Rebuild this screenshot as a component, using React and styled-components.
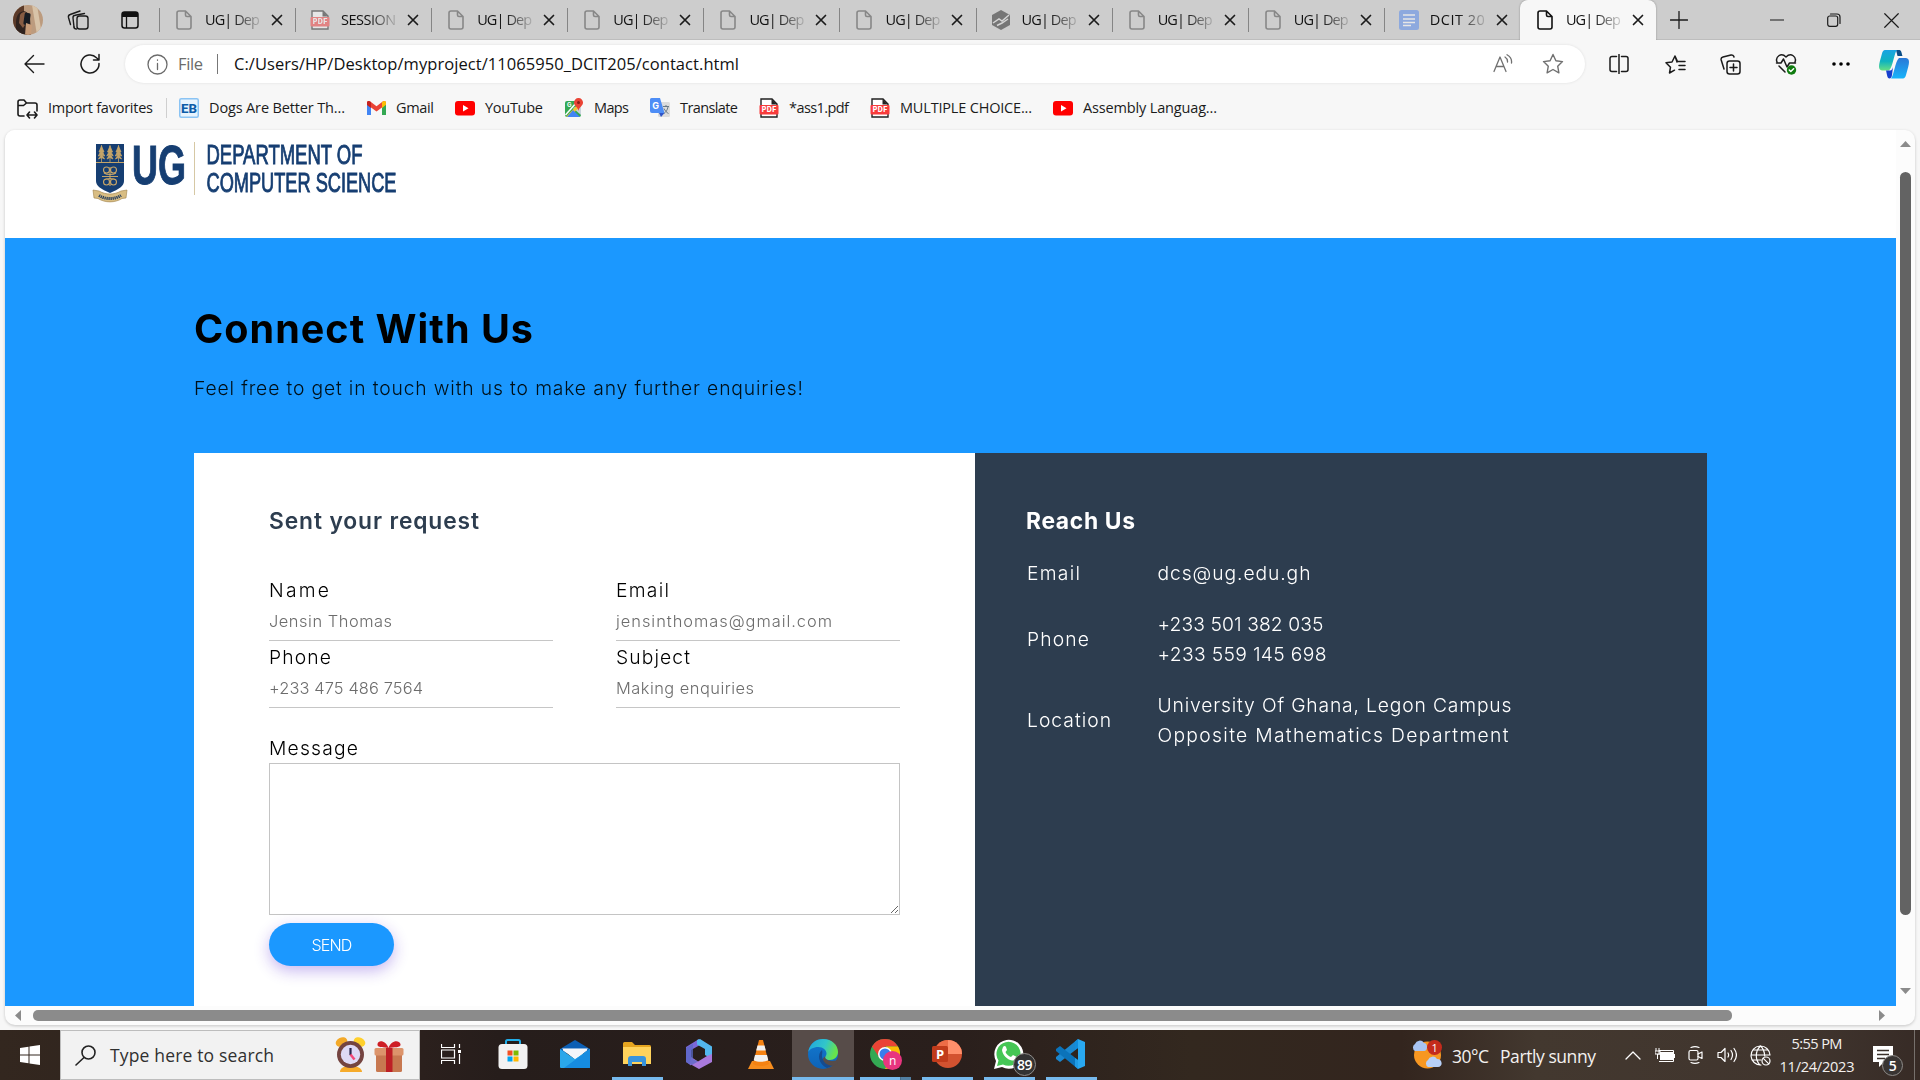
import React, { useLayoutEffect, useRef } from "react";
import styled, { createGlobalStyle, css } from "styled-components";

const Global = createGlobalStyle`
  * { box-sizing: border-box; }
  html, body { margin: 0; padding: 0; overflow: hidden; background: #f7f7f7; }
  #root { font-family: "Open Sans", "Noto Sans", sans-serif; color: #1b1b1b; }
  svg { display: block; flex: none; }
`;

const ui = css`font-family: "Open Sans", "Noto Sans", sans-serif;`;
const geo = css`font-family: Inter, "Open Sans", sans-serif;`;

/* Single-line text tracked so that it fills a given width. */
const FitBox = styled.span`
  display: block;
  flex: none;
  width: ${(p) => p.$w}px;
  white-space: nowrap;
`;
function Fit({ w, children, className }) {
  const ref = useRef(null);
  useLayoutEffect(() => {
    const el = ref.current;
    el.style.letterSpacing = "0px";
    const natural = el.getBoundingClientRect().width;
    el.style.letterSpacing = `${(w - natural) / Math.max(1, el.textContent.length - 1)}px`;
  }, [w, children]);
  return (
    <FitBox $w={w} className={className}>
      <span ref={ref}>{children}</span>
    </FitBox>
  );
}

/* ---------- window frame ---------- */
const Screen = styled.div`
  width: 1920px;
  height: 1080px;
  display: flex;
  flex-direction: column;
  overflow: hidden;
  background: #f7f7f7;
`;
const TabStrip = styled.div`
  height: 40px;
  display: flex;
  align-items: stretch;
  background: #cdcdcd;
  box-shadow: inset 0 -1px 0 #bdbdbd;
`;
const StripTools = styled.div`
  width: 159px;
  display: flex;
  align-items: center;
  padding-left: 13px;
`;
const ToolGap = styled.span`width: ${(p) => p.$w}px; flex: none;`;
const Tab = styled.div`
  width: 136.1px;
  flex: none;
  display: flex;
  align-items: center;
  padding-left: 15px;
  ${(p) => p.$active && css`
    background: #f7f7f7;
    border-radius: 8px 8px 0 0;
    box-shadow: 0 0 2px rgba(0,0,0,.35);
    clip-path: inset(0 -3px 0 -3px);
  `}
`;
const TabSeparator = styled.i`
  width: 1px;
  height: 24px;
  margin-left: -15px;
  margin-right: 14px;
  background: ${(p) => (p.$hidden ? "transparent" : "#858585")};
`;
const TabIcon = styled.span`width: 20px; margin-right: 11px; display: flex; justify-content: center; opacity: ${(p) => (p.$dim ? 0.5 : 1)};`;
const TabTitle = styled(Fit)`
  ${ui}
  font-size: 14.5px;
  line-height: 24px;
  overflow: hidden;
  color: #111;
  margin-right: 11px;
  mask-image: linear-gradient(90deg, #000 50%, rgba(0,0,0,.15));
`;
const StripEnd = styled.div`flex: 1; display: flex; align-items: center; padding-left: 14px;`;

const Toolbar = styled.div`
  height: 48px;
  display: flex;
  align-items: center;
  padding-left: 23px;
`;
const AddressBar = styled.div`
  width: 1460px;
  height: 38px;
  border-radius: 19px;
  background: #fff;
  box-shadow: 0 0 3px rgba(0,0,0,.1);
  display: flex;
  align-items: center;
  padding-left: 22px;
  ${ui}
  font-size: 16.5px;
  line-height: 24px;
`;
const Scheme = styled(Fit)`color: #6b6b6b; margin-left: 10px;`;
const AddressRule = styled.i`width: 1px; height: 20px; background: #777; margin: 0 16px 0 14px;`;
const Url = styled(Fit)`color: #111; flex: none;`;

const Bookmarks = styled.div`
  height: 40px;
  display: flex;
  align-items: center;
  gap: 21px;
  padding-left: 17px;
  ${ui}
  font-size: 14.5px;
  line-height: 24px;
`;
const Bookmark = styled.div`display: flex; align-items: center; gap: 10px;`;
const BookmarkIcon = styled.span`width: ${(p) => p.$w || 20}px; display: flex; justify-content: center;`;
const BookmarkRule = styled.i`width: 1px; height: 20px; background: #cfcfcf; margin: 0 -9px 0 -8px;`;

/* ---------- page ---------- */
const Viewport = styled.div`
  width: 1910px;
  height: 895px;
  margin: 2px 5px 0;
  border-radius: 10px;
  overflow: hidden;
  background: #fcfcfc;
  display: grid;
  grid-template-columns: 1891px 19px;
  grid-template-rows: 876px 19px;
`;
const ViewportShell = styled.div`
  height: 902px;
  flex: none;
  filter: drop-shadow(0 1px 1.5px rgba(0,0,0,.2));
`;
const Page = styled.div`overflow: hidden; background: #fff;`;
const SiteHeader = styled.header`height: 108px; padding: 10px 0 0 86px;`;
const Hero = styled.main`
  height: 768px;
  background: #1b98ff;
  padding: 61px 0 0 189px;
  ${geo}
`;
const Title = styled.h1`margin: 0; font-size: 39.5px; line-height: 60px; font-weight: 700; color: #000;`;
const Subtitle = styled.p`margin: 14px 0 50px; font-size: 19.3px; line-height: 30px; font-weight: 300; color: #001018;`;
const Card = styled.section`display: flex; height: 553px;`;
const FormPanel = styled.form`width: 781px; background: #fff; padding: 50px 75px 0; color: #000;`;
const InfoPanel = styled.div`width: 732px; background: #2d3d4f; padding: 50px 0 0 51px; color: #fff;`;
const PanelTitle = styled.h2`
  margin: 0;
  font-size: 22.8px;
  line-height: 36px;
  font-weight: ${(p) => p.$weight};
  color: ${(p) => p.$color};
`;
const Fields = styled.div`
  display: grid;
  grid-template-columns: 284px 284px;
  grid-template-rows: 66.5px 66.5px;
  column-gap: 63px;
  margin: 36px 0 25px;
`;
const Field = styled.div`display: flex; flex-direction: column; height: 66px;`;
const Label = styled.label`display: block; font-size: 19.3px; line-height: 30px; font-weight: 300;`;
const FieldValue = styled.div`
  height: 36px;
  border-bottom: 1px solid #c6c6c6;
  padding-top: 1px;
  font-size: 16.4px;
  line-height: 30px;
  font-weight: 300;
  color: #6c6c6c;
`;
const Message = styled.textarea`
  display: block;
  width: 631px;
  height: 152px;
  border: 1px solid #c4c4c4;
  outline: none;
  resize: both;
  background: #fff;
`;
const Send = styled.button`
  display: flex;
  justify-content: center;
  align-items: center;
  margin-top: 8px;
  width: 125px;
  height: 43px;
  border: 0;
  border-radius: 22px;
  background: #1b98ff;
  color: #fff;
  ${geo}
  font-size: 16px;
  font-weight: 300;
  box-shadow: 0 5px 15px rgba(80, 30, 210, .32);
`;
const Contacts = styled.dl`
  display: grid;
  grid-template-columns: 130.5px auto;
  row-gap: 21px;
  margin: 19px 0 0 1px;
  align-items: center;
  font-size: 19.3px;
  line-height: 30px;
  font-weight: 300;
`;
const Term = styled.dt`margin: 0;`;
const Detail = styled.dd`margin: 0;`;

const VTrack = styled.div`display: flex; flex-direction: column; align-items: center; padding-top: 11px;`;
const VThumb = styled.i`width: 11px; height: 743px; border-radius: 6px; background: #636363; margin: 25px 0 73px;`;
const HTrack = styled.div`display: flex; align-items: center; padding-left: 10px;`;
const HThumb = styled.i`width: 1699px; height: 11px; border-radius: 5px; background: #8b8b8b; margin: 0 147px 0 12px;`;

/* ---------- taskbar ---------- */
const Taskbar = styled.div`
  height: 50px;
  flex: none;
  display: flex;
  color: #f4f1ef;
  background: linear-gradient(90deg, #33271f 0, #2b201d 22%, #261d1b 26%, #2a1f1c 50%, #33281f 62%, #33251e 73%, #43382f 80%, #40352e 94%, #372b26 100%);
`;
const StartButton = styled.div`width: 60px; display: flex; justify-content: center; align-items: center;`;
const SearchBox = styled.div`
  width: 360px;
  display: flex;
  align-items: center;
  padding-left: 14px;
  background: #f2f2f2;
  border: 1px solid #bdbdbd;
  color: #303030;
  ${ui}
  font-size: 17.5px;
  line-height: 26px;
`;
const SearchText = styled(Fit)`margin: 0 61px 0 14px;`;
const TaskCell = styled.div`
  width: 62px;
  flex: none;
  display: grid;
  grid-template-rows: 47px 3px;
  justify-items: center;
  align-items: center;
  background: ${(p) => (p.$active ? "#574c49" : "transparent")};
`;
const Running = styled.i`
  width: ${(p) => (p.$full ? 62 : 51)}px;
  height: 3px;
  background: ${(p) => (p.$stacked ? "linear-gradient(90deg, #76b9ed 40px, #3e5a70 40px, #527fa2 41px)" : "#76b9ed")};
`;
const BadgeHost = styled.span`position: relative; display: block;`;
const CountBadge = styled.span`
  position: absolute;
  left: ${(p) => p.$x}px;
  top: ${(p) => p.$y}px;
  width: ${(p) => p.$d}px;
  height: ${(p) => p.$d}px;
  border-radius: 50%;
  background: ${(p) => p.$bg};
  border: ${(p) => (p.$plain ? "0" : "1px solid #8f8c8a")};
  color: #fff;
  ${ui}
  font-weight: ${(p) => (p.$plain ? 400 : 600)};
  font-size: ${(p) => p.$size}px;
  display: flex;
  align-items: center;
  justify-content: center;
  letter-spacing: -.5px;
`;
const Tray = styled.div`
  margin-left: auto;
  width: 508px;
  display: flex;
  align-items: center;
  ${ui}
  font-size: 17.5px;
  line-height: 26px;
`;
const TrayText = styled(Fit)`margin-left: ${(p) => p.$ml}px;`;
const Weather = styled.div`display: flex; width: 144px; margin: 2px 0 0 10px; justify-content: space-between;`;
const TrayIcons = styled.div`display: flex; align-items: center; width: 146px; margin-left: 29px; justify-content: space-between;`;
const Clock = styled.div`
  width: 76px;
  margin-left: 8px;
  display: flex;
  flex-direction: column;
  align-items: center;
  font-size: 14.6px;
  line-height: 23px;
`;
const Notice = styled.div`margin-left: 18px; padding-top: 3px;`;
const ShowDesktop = styled.i`width: 1px; height: 50px; margin-left: auto; margin-right: 5px; background: #76706c;`;

/* ---------- drawings ---------- */
const Line = ({ w = 20, h = w, vb = "0 0 20 20", s = 1.4, c = "#1b1b1b", children }) => (
  <svg width={w} height={h} viewBox={vb} fill="none" stroke={c} strokeWidth={s} strokeLinecap="round" strokeLinejoin="round">{children}</svg>
);
const Pic = ({ w, h = w, vb = `0 0 ${w} ${h}`, children }) => (
  <svg width={w} height={h} viewBox={vb}>{children}</svg>
);
const FileIcon = ({ active }) => (
  <Line w={16} h={20} vb="0 0 16 20" s={1.6} c={active ? "#111" : "#444"}>
    <path d="M3 1h6.5L15 6.5V17a2 2 0 0 1-2 2H3a2 2 0 0 1-2-2V3a2 2 0 0 1 2-2zM9.5 1v4a1.5 1.5 0 0 0 1.500 1.500H15" />
  </Line>
);
const PdfIcon = () => (
  <Pic w={20} h={20}>
    <path d="M2 1h11l5 5v13H2z" fill="#fff" stroke="#222" strokeWidth="1.4" />
    <path d="M12.500 1v5.500H18z" fill="#222" />
    <rect x="0.500" y="7" width="19" height="9.500" rx="1" fill="#f83b3b" />
    <text x="10" y="14.300" textAnchor="middle" fontSize="7" fontWeight="800" fontFamily="Inter" textLength="14.500" fill="#fff">PDF</text>
  </Pic>
);
const DocIcon = () => (
  <Pic w={20}><rect width="20" height="20" rx="2.500" fill="#4f86ef" /><path d="M4 5h12M4 9h12M4 12.500h12M4 15.500h8" stroke="#fff" strokeWidth="1.700" /></Pic>
);
const HexIcon = () => (
  <Pic w={20}><path d="M10 0l9 5v10l-9 5-9-5V5z" fill="#222" /><path d="M2 13l6-4 3 2 7-6M6 15.500l5-2.500 6-4" fill="none" stroke="#ddd" strokeWidth="1.500" /></Pic>
);
const CloseIcon = () => <Line w={12} s={1.700} vb="0 0 12 12"><path d="M1.500 1.500l9 9M10.500 1.500l-9 9" /></Line>;

const Avatar = () => (
  <Pic w={30}>
    <defs><clipPath id="face"><circle cx="15" cy="15" r="15" /></clipPath></defs>
    <g clipPath="url(#face)">
      <rect width="30" height="30" fill="#bc9b7e" />
      <rect width="11" height="30" fill="#5b3a29" />
      <path d="M19 0h5l5 30h-5z" fill="#d8c3a8" />
      <path d="M3 30V17c0-12 12-15 14-4l1 17z" fill="#30231f" />
      <path d="M7 10c4-6 9-2 8 5l-5 8-4-5z" fill="#875c43" />
      <rect x="11" y="8" width="6" height="12" rx="1.500" fill="#171b22" transform="rotate(8 14 14)" />
      <path d="M13 18l6 2-1 10h-6z" fill="#c79c79" />
    </g>
  </Pic>
);
const Workspaces = () => (
  <Line w={22} vb="0 0 22 22" s={1.400}>
    <rect x="10" y="7" width="11" height="13" rx="2.500" />
    <path d="M7 18l-1-9a2.500 2.500 0 0 1 2.200-2.700L17.500 4.500M3.500 15.500L1.500 8.500A2.500 2.500 0 0 1 3.200 5.500L13 2" />
    <path d="M9.500 20C8 20 7 19 7 18" />
  </Line>
);
const TabActions = () => (
  <Pic w={18}><rect x="1" y="1" width="16" height="16" rx="2.500" fill="none" stroke="#111" strokeWidth="1.500" /><path d="M1 3a2 2 0 0 1 2-2h12a2 2 0 0 1 2 2v3H1z" fill="#111" /><path d="M5.500 6v11" stroke="#111" strokeWidth="1.300" /></Pic>
);
const Youtube = () => <Pic w={20} h={15}><rect width="20" height="14.500" rx="3" fill="#f00" /><path d="M8 4l5.500 3.200L8 10.500z" fill="#fff" /></Pic>;
const Gmail = () => (
  <Pic w={19} h={14}><path d="M0 1.500V14h4V5z" fill="#4285f4" /><path d="M19 1.500V14h-4V5z" fill="#34a853" /><path d="M0 1.800C0 0 2-.5 3.300.6L9.500 5.300 15.700.6C17-.5 19 0 19 1.800V3.500l-9.500 7L0 3.500z" fill="#ea4335" /><path d="M15 1.200C17-.7 19 0 19 1.800v2L15 7z" fill="#fbbc04" /><path d="M0 1.800C0 0 2-.7 4 1.200V7L0 4z" fill="#c5221f" /></Pic>
);
const Maps = () => (
  <Pic w={20}>
    <rect x="1" y="3" width="16" height="16" rx="2" fill="#34a853" />
    <path d="M17 7v10L9 10z" fill="#c9d3dc" /><path d="M2 19L14 6l3 2L5 19z" fill="#f6c433" /><path d="M3 19l6-7 7 7z" fill="#4285f4" />
    <path d="M1.500 17L13 4" stroke="#fff" strokeWidth="1.500" /><text x="3" y="9" fontSize="6" fontWeight="700" fontFamily="Inter" fill="#fff">G</text>
    <path d="M14.500 0a4.500 4.500 0 0 1 4.500 4.700c0 3-3.700 4-4.500 8.300-.8-4.300-4.500-5.300-4.500-8.300A4.500 4.500 0 0 1 14.500 0z" fill="#ea4335" /><circle cx="14.500" cy="4.600" r="1.500" fill="#8b1c16" />
  </Pic>
);
const Translate = () => (
  <Pic w={20}>
    <rect x="8" y="4" width="12" height="15" rx="1.500" fill="#dcdcdc" /><path d="M1.500 0H10l4.500 15H2a2 2 0 0 1-2-2V1.500A1.500 1.500 0 0 1 1.500 0z" fill="#4d8df6" /><path d="M9 15h5.500L11 19z" fill="#2f55c8" />
    <text x="2.300" y="11" fontSize="9" fontWeight="700" fontFamily="Inter" fill="#fff">G</text><path d="M13 8.500h6M16 7v1.500M18 9c-.7 3-2 5-4 6.500M14 10.500c1 2 2.500 4 4.500 5" fill="none" stroke="#6a7a86" />
  </Pic>
);
const BritIcon = () => (
  <Pic w={20}><rect x=".75" y=".75" width="18.500" height="18.500" rx="1.500" fill="#e7f3fd" stroke="#8bc4f4" strokeWidth="1.500" /><text x="10" y="15" textAnchor="middle" fontSize="13" fontWeight="800" fontFamily="Roboto" textLength="16" lengthAdjust="spacingAndGlyphs" fill="#0c5ba8">EB</text></Pic>
);
const ImportIcon = () => <Line w={21} vb="0 0 21 21" s={1.600}><path d="M7 18H3a2 2 0 0 1-2-2V4a2 2 0 0 1 2-2h4l2.500 3H18a2 2 0 0 1 2 2v6M1 7.500h5.500L9.500 5M10 17h10M12.500 14L10 17l2.500 3M17.500 14l2.500 3-2.500 3" /></Line>;
const Copilot = () => (
  <Pic w={30}>
    <defs>
      <linearGradient id="cpa" x1="0" y1="0" x2="0" y2="1"><stop offset="0" stopColor="#18a3e3" /><stop offset=".55" stopColor="#0fb3bf" /><stop offset="1" stopColor="#67df83" /></linearGradient>
      <linearGradient id="cpb" x1="0" y1="0" x2="0" y2="1"><stop offset="0" stopColor="#2a78d6" /><stop offset="1" stopColor="#17b4fb" /></linearGradient>
    </defs>
    <path d="M17 1h3.500c2 .3 2 3 3 6h-5z" fill="#0a4d86" />
    <path d="M6 1h12c-3 3-4 17-8 20.500H3C-.5 21-.5 17.500.8 12.500L3 4.500C3.600 2.300 4.500 1 6 1z" fill="url(#cpa)" />
    <path d="M24 29.500H12c3-3 4-17 8-20.500h7c3.500.5 3.500 4 2.200 9L27 26c-.6 2.300-1.500 3.500-3 3.500z" fill="url(#cpb)" />
    <path d="M7 21.500h4c2 0 2.500-2 3-3.500l-1 8c-.3 2-1 3.500-2.500 3.500C8 29.500 8 25 7 21.500z" fill="#163fce" />
  </Pic>
);
const UgLogo = () => (
  <svg width="320" height="66" viewBox="91 140 320 66" fontFamily="Liberation Sans">
    <path d="M96 144h28v37c0 5-5 8-14 12-9-4-14-7-14-12z" fill="#163e72" />
    <path d="M96 162.500h28" stroke="#c5a468" strokeWidth="1" />
    {[101.500, 110, 118.500].map((x) => (
      <path key={x} d={`M${x} 145v17M${x} 146l-2.500 6h5zM${x} 150l-3.200 6 3.200-1.500 3.200 1.500zM${x} 154l-3 5 3-1.500 3 1.500z`} fill="#c5a468" stroke="#c5a468" strokeWidth=".8" />
    ))}
    <g fill="none" stroke="#c5a468" strokeWidth="1.100">
      <path d="M110 167v19M102 176.500h16" />
      <circle cx="106.500" cy="170" r="3" /><circle cx="113.500" cy="170" r="3" /><circle cx="106.500" cy="182" r="3" /><circle cx="113.500" cy="182" r="3" />
      <path d="M104 173c3 2 9 2 12 0M104 180c3-2 9-2 12 0" />
    </g>
    <path d="M93 190l6 1c7 4 15 4 22 0l6-1-1 8-4 .5c-7 4.500-17 4.500-24 0l-4-.5z" fill="#d8bd83" stroke="#9d8047" strokeWidth=".6" />
    <path d="M99 195.500c6 4 16 4 22 0" fill="none" stroke="#29405d" strokeWidth="3" strokeDasharray="1.300 .7" />
    <g fill="#163e72" stroke="#163e72">
      <text x="132" y="184" fontSize="56" fontWeight="700" textLength="54" lengthAdjust="spacingAndGlyphs">UG</text>
      <text x="206.500" y="163.700" fontSize="27" strokeWidth=".9" textLength="156" lengthAdjust="spacingAndGlyphs">DEPARTMENT OF</text>
      <text x="206.500" y="192.200" fontSize="27" strokeWidth=".9" textLength="190" lengthAdjust="spacingAndGlyphs">COMPUTER SCIENCE</text>
    </g>
    <path d="M194.500 142v53" stroke="#d6c8a4" />
  </svg>
);
const Windows = () => <Pic w={20}><path d="M0 3l8.500-1.200v7.700H0zM9.500 1.600L20 0v9.500H9.500zM0 10.500h8.500v7.700L0 17zM9.500 10.500H20V20L9.500 18.400z" fill="#fff" /></Pic>;
const AlarmGift = () => (
  <Pic w={70} h={38}>
    <ellipse cx="6.500" cy="6" rx="6" ry="4.500" fill="#f3a928" transform="rotate(-25 6.500 6)" /><ellipse cx="24.500" cy="6" rx="6" ry="4.500" fill="#ffd02c" transform="rotate(25 24.500 6)" />
    <path d="M5 36c0-4 4-6 10.500-6S27 32 27 36z" fill="#f6ab2b" />
    <circle cx="15.500" cy="18.500" r="13.500" fill="#744440" /><circle cx="15.500" cy="18.500" r="9.700" fill="#ded9f5" /><path d="M15.500 12v7" stroke="#29264c" strokeWidth="2.200" /><path d="M15.500 18.500l4 5" stroke="#f34978" strokeWidth="2.500" />
    <rect x="41" y="16" width="26" height="20" rx="1.500" fill="#c77850" /><rect x="39.500" y="12" width="29" height="7.500" rx="1.500" fill="#dc946b" /><rect x="51" y="12" width="6.500" height="24" fill="#bd1f25" /><path d="M53.500 12c-4-1-12 0-11-4 1-5 9-3 11 4 2-7 10-9 12-4 1 4-7 3-12 4z" fill="#ce1e25" />
  </Pic>
);
const TaskView = () => <Pic w={20}><path d="M.5 0v3.500h13V0M.5 20v-3.500h13V20M.5 6h13v8H.5zM18.500 0v4M18.500 10v10" fill="none" stroke="#fff" strokeWidth="1.200" /><rect x="17" y="6" width="3" height="3" fill="#fff" /></Pic>;
const Store = () => (
  <Pic w={30}><path d="M8 6V2.500A1.500 1.500 0 0 1 9.500 1h11A1.500 1.500 0 0 1 22 2.500V6" fill="none" stroke="#22aee9" strokeWidth="2" /><rect x=".5" y="5" width="29" height="25" rx="3.500" fill="#f2f2f2" /><path d="M9.500 11.500h5v5h-5z" fill="#f25022" /><path d="M15.500 11.500h5v5h-5z" fill="#7fba00" /><path d="M9.500 17.500h5v5h-5z" fill="#00a4ef" /><path d="M15.500 17.500h5v5h-5z" fill="#ffb900" /></Pic>
);
const Mail = () => <Pic w={30}><path d="M0 10L15 1l15 9v4H0z" fill="#0c5fb4" /><path d="M2 9.500h26l-12 12z" fill="#fff" /><path d="M0 10l15 10 15-10v18a1 1 0 0 1-1 1H1a1 1 0 0 1-1-1z" fill="#2aa7ea" /><path d="M30 10L4 29h25a1 1 0 0 0 1-1z" fill="#168ce0" /><path d="M3 11.500l12 8 12-8v-1.500H3z" fill="#f2f6fa" /></Pic>;
const Explorer = () => <Pic w={28} h={26}><path d="M0 2.500A1.500 1.500 0 0 1 1.500 1H9l3 3h14.500A1.500 1.500 0 0 1 28 5.500V23H0z" fill="#e5a520" /><path d="M0 6h28v17H0z" fill="#ffd35c" /><path d="M5 25v-7a3 3 0 0 1 3-3h12a3 3 0 0 1 3 3v7h-4v-4H9v4z" fill="#3994dc" /></Pic>;
const Office = () => (
  <Pic w={28} h={30}><path d="M14 0L1 8v15l5 3.500V11l9-5z" fill="#7c68d9" /><path d="M12 1l3-1 12 7.500V20l-7-4V10L12 5.500z" fill="#52b7ee" /><path d="M27 15v8l-13 7-9-5 1-7 7 4.500L22 17z" fill="#a979dc" /><path d="M1 9l7-4v15l5 2.500L7 26l-6-3z" fill="#5868c5" opacity=".75" /></Pic>
);
const Vlc = () => <Pic w={26} h={30}><path d="M4 22h18l4 8H0z" fill="#f78d1e" /><path d="M11 1h4l6 24c-4 2.500-12 2.500-16 0z" fill="#f58212" /><path d="M9.500 6.500h7l1.300 5H8.200zM7 16h12l1.300 5.200c-4 2-10.600 2-14.600 0z" fill="#f1f1f1" /></Pic>;
const Edge = () => (
  <Pic w={30}>
    <defs><linearGradient id="ea" x1="0" y1="0" x2="1" y2=".3"><stop offset="0" stopColor="#20a4e0" /><stop offset=".6" stopColor="#32c6c9" /><stop offset="1" stopColor="#67e34d" /></linearGradient><linearGradient id="eb" x1="0" y1="0" x2="0" y2="1"><stop offset="0" stopColor="#1379cf" /><stop offset="1" stopColor="#0d63b8" /></linearGradient></defs>
    <circle cx="15" cy="15" r="15" fill="url(#eb)" /><path d="M.2 13C2 4 8 0 15 0c9 0 15 6 15 13 0 5-4 8-8 8-4 0-5-1.500-5-2.500 0-1 1.500-1.500 1.500-4C18.500 11 15 8 10.500 8 5 8 1.500 10.500.2 13z" fill="url(#ea)" />
    <path d="M14 11c-5 4-4 14 5 18 4-1 7-3 9-7-7 4-13 1-14-4-.5-3 1-4 0-7z" fill="#154b8f" /><path d="M17.300 17c-1 3 3 6 10.700 4.500l2-3v5l-4 3c-6 1-11-3-11-7z" fill="#574c49" />
  </Pic>
);
const Chrome = () => (
  <Pic w={30}><circle cx="15" cy="15" r="15" fill="#34a853" /><path d="M2 7.500A15 15 0 0 1 28 7.500H15L9 18z" fill="#ea4335" /><path d="M28 7.500A15 15 0 0 1 15 30l6-12-5-10.500z" fill="#fbbc04" /><circle cx="15" cy="15" r="7" fill="#fff" /><circle cx="15" cy="15" r="5.500" fill="#3b7ded" /></Pic>
);
const PowerPoint = () => (
  <Pic w={30}><circle cx="16" cy="15" r="14" fill="#d35230" /><path d="M16 1a14 14 0 0 1 14 14H16z" fill="#ff8f6b" /><path d="M16 1v14H2A14 14 0 0 1 16 1z" fill="#ed6c47" /><rect x="0" y="7" width="16" height="16" rx="1.500" fill="#c13b1b" /><text x="8" y="20" textAnchor="middle" fontFamily="Open Sans" fontWeight="700" fontSize="13" fill="#fff">P</text></Pic>
);
const WhatsApp = () => <Pic w={30}><path d="M0 30l2-8A14.500 14.500 0 1 1 8 28z" fill="#fff" /><path d="M3 27l1.500-5.500A12 12 0 1 1 9 25.500z" fill="#45c655" /><path d="M9 8c1-1.500 2.500-1.500 3 0l1 3-1.500 2c1 2.500 3 4 5.500 5l2-2 3.500 1.800c.5 2.500-2 4.200-4.500 3.700C13 20.500 8.500 16 8 11z" fill="#fff" /></Pic>;
const Code = () => <Pic w={30}><path d="M22 0l7 3v24l-7 3z" fill="#29a8f0" /><path d="M22 0v9L4 23l-4-3v-2z" fill="#1a87cf" /><path d="M22 30v-9L4 7l-4 3v2z" fill="#0b73ba" /><path d="M22 0v9l-3 2V2.500z" fill="#118ddc" /><path d="M22 30v-9l-3-2v8.500z" fill="#1f9be4" /></Pic>;
const SunCloud = () => (
  <Pic w={30} h={30}><circle cx="15.500" cy="15" r="13.500" fill="#f79722" /><path d="M3 11a4 4 0 0 1 0-7A5 5 0 0 1 12 3c4 0 4 8 0 8z" fill="#a8c4f2" /><path d="M16 27a4 4 0 0 1 0-7 5 5 0 0 1 9-1c6 0 6 8 1 8z" fill="#b7d0f8" /></Pic>
);

/* ---------- content ---------- */
const tabs = [
  { text: "UG| Dep", icon: <FileIcon /> },
  { text: "SESSION", icon: <PdfIcon /> },
  { text: "UG| Dep", icon: <FileIcon /> },
  { text: "UG| Dep", icon: <FileIcon /> },
  { text: "UG| Dep", icon: <FileIcon /> },
  { text: "UG| Dep", icon: <FileIcon /> },
  { text: "UG| Dep", icon: <HexIcon /> },
  { text: "UG| Dep", icon: <FileIcon /> },
  { text: "UG| Dep", icon: <FileIcon /> },
  { text: "DCIT 20", icon: <DocIcon /> },
  { text: "UG| Dep", icon: <FileIcon active />, active: true },
];
const bookmarks = [
  { text: "Dogs Are Better Th...", w: 136, icon: <BritIcon /> },
  { text: "Gmail", w: 38, icon: <Gmail /> },
  { text: "YouTube", w: 58, icon: <Youtube /> },
  { text: "Maps", w: 35, icon: <Maps /> },
  { text: "Translate", w: 58, icon: <Translate /> },
  { text: "*ass1.pdf", w: 60, icon: <PdfIcon /> },
  { text: "MULTIPLE CHOICE...", w: 132, icon: <PdfIcon /> },
  { text: "Assembly Languag...", w: 134, icon: <Youtube /> },
];
const fields = [
  { label: "Name", lw: 60, value: "Jensin Thomas", vw: 123 },
  { label: "Email", lw: 53, value: "jensinthomas@gmail.com", vw: 216 },
  { label: "Phone", lw: 62, value: "+233 475 486 7564", vw: 154 },
  { label: "Subject", lw: 74, value: "Making enquiries", vw: 138 },
];
const contacts = [
  { term: "Email", tw: 53, lines: [["dcs@ug.edu.gh", 153]] },
  { term: "Phone", tw: 62, lines: [["+233 501 382 035", 166], ["+233 559 145 698", 169]] },
  { term: "Location", tw: 84, lines: [["University Of Ghana, Legon Campus", 354], ["Opposite Mathematics Department", 351]] },
];

function Tabs() {
  return (
    <TabStrip>
      <StripTools>
        <Avatar /><ToolGap $w={24} /><Workspaces /><ToolGap $w={32} /><TabActions />
      </StripTools>
      {tabs.map((t, i) => (
        <Tab key={i} $active={t.active}>
          <TabSeparator $hidden={t.active} />
          <TabIcon $dim={!t.active}>{t.icon}</TabIcon>
          <TabTitle w={55}>{t.text}</TabTitle>
          <CloseIcon />
        </Tab>
      ))}
      <StripEnd>
        <Line w={18} vb="0 0 18 18" s={1.300}><path d="M9 .5v17M.5 9h17" /></Line>
        <ToolGap $w={82} />
        <Line w={14} vb="0 0 14 14" s={1.200}><path d="M.5 7h13" /></Line>
        <ToolGap $w={43} />
        <Line w={14} vb="0 0 14 14" s={1.200}><rect x=".7" y="3" width="10" height="10.300" rx="2" /><path d="M3.500 1h6.500a3 3 0 0 1 3 3v6.500" /></Line>
        <ToolGap $w={43} />
        <Line w={15} vb="0 0 14 14" s={1.100}><path d="M.7.700l12.600 12.600M13.300.7L.7 13.300" /></Line>
      </StripEnd>
    </TabStrip>
  );
}

function Address() {
  return (
    <Toolbar>
      <Line w={22} vb="0 0 22 22"><path d="M21 11H2M10.500 2.500L2 11l8.500 8.500" /></Line>
      <ToolGap $w={34} />
      <Line w={22} vb="0 0 22 22" s={1.500}><path d="M20 10.500A9 9 0 1 1 17.500 4.800L20 7M20 1.500V7h-5.500" /></Line>
      <ToolGap $w={24} />
      <AddressBar>
        <Line w={21} vb="0 0 21 21" s={1.300} c="#6b6b6b"><circle cx="10.500" cy="10.500" r="9.500" /><path d="M10.500 9.500v6M10.500 6v.3" /></Line>
        <Scheme w={25}>File</Scheme>
        <AddressRule />
        <Url w={505}>C:/Users/HP/Desktop/myproject/11065950_DCIT205/contact.html</Url>
        <ToolGap $w={754} />
        <Line w={20} s={1.300} c="#707070"><path d="M1 17.500L7 3l6 14.500M3 12.500h8M12 3c2 1.300 2.700 3 2.500 5M14 .8c3.500 2 5 4.700 4.500 8.200" /></Line>
        <ToolGap $w={29} />
        <Line w={22} vb="0 0 22 22" s={1.400} c="#707070"><path d="M11 1.500l2.900 6.200 6.600.9-4.800 4.600 1.200 6.600L11 16.500l-5.900 3.300 1.200-6.600L1.500 8.600l6.600-.9z" /></Line>
      </AddressBar>
      <ToolGap $w={24} />
      <Line w={20} s={1.500}><path d="M7.500 2.500H3a2 2 0 0 0-2 2v11a2 2 0 0 0 2 2h4.500M12.500 2.500H17a2 2 0 0 1 2 2v11a2 2 0 0 1-2 2h-4.500M10 .5v19" /></Line>
      <ToolGap $w={36} />
      <Line w={21} vb="0 0 21 21" s={1.500}><path d="M12 8l-2-6-3 6-6 .7 4.500 4.500L4.500 19l5-2.800M10 2l2.500 5.500H20M14 11.500h6M14 15.500h6" /></Line>
      <ToolGap $w={34} />
      <Line w={21} vb="0 0 21 21" s={1.500}><rect x="7" y="7" width="13" height="13" rx="2.500" /><path d="M13.500 10v7M10 13.500h7M4 15L1.200 6A2.500 2.500 0 0 1 3 3l8-2a2.500 2.500 0 0 1 3 2" /></Line>
      <ToolGap $w={34} />
      <Line w={22} vb="0 0 22 22" s={1.500}><path d="M2 9C0 4 6-1 11 4c5-5 11 0 9 5M1.500 10H6l2.500-4 3.500 8 2.500-4h6M4 13l6 6" /><circle cx="16.500" cy="17" r="4.700" fill="#107c10" stroke="none" /><path d="M14.300 17l1.500 1.500 2.800-2.800" stroke="#fff" /></Line>
      <ToolGap $w={35} />
      <Pic w={18} h={4}><circle cx="2" cy="2" r="1.800" /><circle cx="9" cy="2" r="1.800" /><circle cx="16" cy="2" r="1.800" /></Pic>
      <ToolGap $w={29} />
      <Copilot />
    </Toolbar>
  );
}

function ContactPage() {
  return (
    <Page>
      <SiteHeader><UgLogo /></SiteHeader>
      <Hero>
        <Title><Fit w={339}>Connect With Us</Fit></Title>
        <Subtitle><Fit w={609}>Feel free to get in touch with us to make any further enquiries!</Fit></Subtitle>
        <Card>
          <FormPanel>
            <PanelTitle $weight={600} $color="#2d3d4f"><Fit w={210}>Sent your request</Fit></PanelTitle>
            <Fields>
              {fields.map((f) => (
                <Field key={f.label}>
                  <Label><Fit w={f.lw}>{f.label}</Fit></Label>
                  <FieldValue><Fit w={f.vw}>{f.value}</Fit></FieldValue>
                </Field>
              ))}
            </Fields>
            <Label><Fit w={89}>Message</Fit></Label>
            <Message />
            <Send type="button"><Fit w={41}>SEND</Fit></Send>
          </FormPanel>
          <InfoPanel>
            <PanelTitle $weight={700} $color="#fff"><Fit w={109}>Reach Us</Fit></PanelTitle>
            <Contacts>
              {contacts.map((c) => (
                <React.Fragment key={c.term}>
                  <Term><Fit w={c.tw}>{c.term}</Fit></Term>
                  <Detail>{c.lines.map(([text, w]) => <Fit key={text} w={w}>{text}</Fit>)}</Detail>
                </React.Fragment>
              ))}
            </Contacts>
          </InfoPanel>
        </Card>
      </Hero>
    </Page>
  );
}

function BottomBar() {
  return (
    <Taskbar>
      <StartButton><Windows /></StartButton>
      <SearchBox>
        <Line w={21} vb="0 0 21 21" s={1.600} c="#222"><circle cx="13.500" cy="7.500" r="6.500" /><path d="M9 12.500L1 20" /></Line>
        <SearchText w={164}>Type here to search</SearchText>
        <AlarmGift />
      </SearchBox>
      <TaskCell><TaskView /></TaskCell>
      <TaskCell><Store /></TaskCell>
      <TaskCell><Mail /></TaskCell>
      <TaskCell><Explorer /><Running /></TaskCell>
      <TaskCell><Office /></TaskCell>
      <TaskCell><Vlc /></TaskCell>
      <TaskCell $active><Edge /><Running $full /></TaskCell>
      <TaskCell>
        <BadgeHost><Chrome /><CountBadge $x={13} $y={12} $d={19} $bg="#e8357f" $plain $size={12}>n</CountBadge></BadgeHost>
        <Running $stacked />
      </TaskCell>
      <TaskCell><PowerPoint /><Running /></TaskCell>
      <TaskCell>
        <BadgeHost><WhatsApp /><CountBadge $x={19} $y={14} $d={23} $bg="#333" $size={14}>89</CountBadge></BadgeHost>
        <Running />
      </TaskCell>
      <TaskCell><Code /><Running /></TaskCell>
      <Tray>
        <BadgeHost><SunCloud /><CountBadge $x={15} $y={0} $d={15} $bg="#c42b1c" $plain $size={11}>1</CountBadge></BadgeHost>
        <Weather><Fit w={37}>30°C</Fit><Fit w={96}>Partly sunny</Fit></Weather>
        <TrayIcons>
          <Line w={16} h={9} vb="0 0 16 9" c="#fff" s={1.300}><path d="M1 8l7-7 7 7" /></Line>
          <Pic w={20} h={16}><rect x="5" y="5" width="13" height="8" fill="#fff" /><path d="M4 8V3.500h14.500v11H4M19.500 7v4M1 1v3M4 1v3M0 4h5v3H0zM2.500 7v5" fill="none" stroke="#fff" /></Pic>
          <Line w={15} h={18} vb="0 0 15 18" c="#fff" s={1.200}><rect x="1" y="4.500" width="9" height="9.500" rx="1.500" /><path d="M10 8l4-2v6.500l-4-2M3 1.500c3-1.300 5-1.300 8 0M3 16.500c3 1.300 5 1.300 8 0" /></Line>
          <Line w={20} h={16} vb="0 0 20 16" c="#fff" s={1.200}><path d="M1 5.500h3l4-4v13l-4-4H1zM11 6c.8 1.300.8 2.700 0 4M14 3.500c2 3 2 6 0 9M17 1.500c3 4 3 9 0 13" /></Line>
          <Line w={21} vb="0 0 21 21" c="#fff" s={1.200}><path d="M11 20A9.500 9.500 0 1 1 20 10M1 10h19M3 5h15M3 15h8M10.500 1C5 6 5 15 10 20M10.500 1c3.500 3 4 6 4.200 10" /><circle cx="16" cy="16" r="4" /><path d="M13.300 13.300l5.500 5.500" /></Line>
        </TrayIcons>
        <Clock><Fit w={51}>5:55 PM</Fit><Fit w={75}>11/24/2023</Fit></Clock>
        <Notice>
          <BadgeHost>
            <Pic w={20} h={21}><path d="M0 0h20v16h-9l-5 5v-5H0z" fill="#fff" /><path d="M4 4.500h12M4 8.500h12M4 12.500h8" stroke="#3b302a" strokeWidth="1.300" /></Pic>
            <CountBadge $x={9} $y={9} $d={21} $bg="#383432" $size={14}>5</CountBadge>
          </BadgeHost>
        </Notice>
        <ShowDesktop />
      </Tray>
    </Taskbar>
  );
}

export default function App() {
  return (
    <>
      <Global />
      <Screen>
        <Tabs />
        <Address />
        <Bookmarks>
          <Bookmark><BookmarkIcon $w={21}><ImportIcon /></BookmarkIcon><Fit w={105}>Import favorites</Fit></Bookmark>
          <BookmarkRule />
          {bookmarks.map((b) => (
            <Bookmark key={b.text}><BookmarkIcon>{b.icon}</BookmarkIcon><Fit w={b.w}>{b.text}</Fit></Bookmark>
          ))}
        </Bookmarks>
        <ViewportShell>
          <Viewport>
            <ContactPage />
            <VTrack>
              <Pic w={11} h={6}><path d="M0 6L5.500 0 11 6z" fill="#8b8b8b" /></Pic>
              <VThumb />
              <Pic w={11} h={6}><path d="M0 0h11L5.500 6z" fill="#8b8b8b" /></Pic>
            </VTrack>
            <HTrack>
              <Pic w={6} h={11}><path d="M6 0v11L0 5.500z" fill="#8b8b8b" /></Pic>
              <HThumb />
              <Pic w={6} h={11}><path d="M0 0l6 5.500L0 11z" fill="#8b8b8b" /></Pic>
            </HTrack>
          </Viewport>
        </ViewportShell>
        <BottomBar />
      </Screen>
    </>
  );
}
